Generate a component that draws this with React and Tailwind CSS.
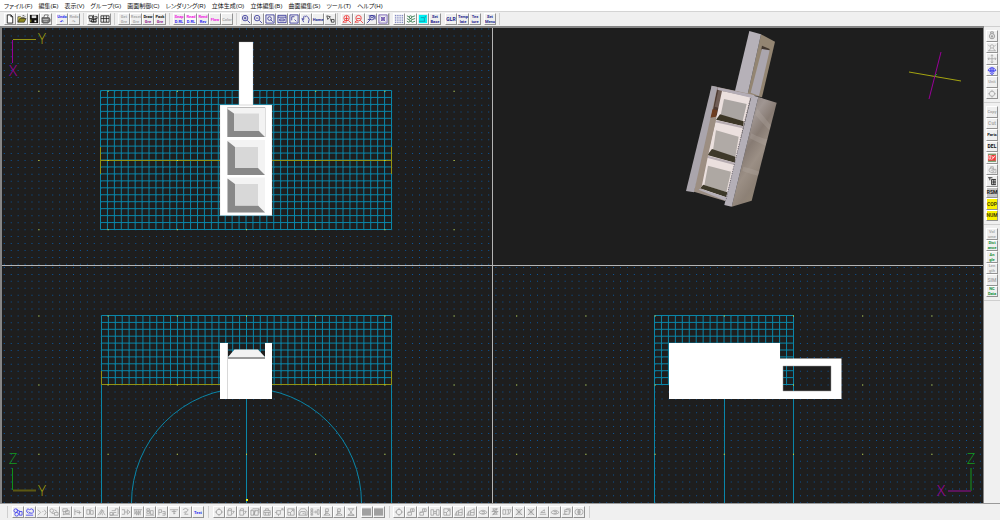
import React from "react";

const MENUS = [
  "ファイル(F)", "編集(E)", "表示(V)", "グループ(G)", "画面制御(C)", "レンダリング(R)",
  "立体生成(O)", "立体編集(B)", "曲面編集(S)", "ツール(T)", "ヘルプ(H)",
];

const GRAY = "#9a9a9a";
const NAVY = "#1c1c8c";
const BLUE = "#2a2af0";
const RED = "#f02020";

/* Stroke drawings on an 11 x 11 box. */
const ICONS = {
  layout: "M1 2h4v3h-4zM6 1v8M2 5v3h7M7 3h3v2h-3M4 6h5v3h-5z",
  grid4: "M1 2h9v7h-9zM4 2v7M7 2v7M1 5h9",
  plus: "M7.5 4.5a3 3 0 1 1-6 0a3 3 0 1 1 6 0M7 7l3 3M3 4.500h3M4.500 3v3",
  minus: "M7.5 4.5a3 3 0 1 1-6 0a3 3 0 1 1 6 0M7 7l3 3M3 4.500h3",
  rise: "M8 4.500a3 3 0 1 1-6 0a3 3 0 1 1 6 0M5 2v6M3 5h4M1 9l2-2M7 7l3 3M1 9h4",
  fall: "M8 4.500a3 3 0 1 1-6 0a3 3 0 1 1 6 0M3 5h4M1 9l2-2M7 7l3 3M1 9h4",
  fit: "M1 1h9v9h-9zM7 5a2 2 0 1 1-4 0a2 2 0 1 1 4 0M6.500 6.500l2 2",
  page: "M1 1.500h9v8h-9zM1 3.500h9M3 5.500h5v2h-5z",
  pick: "M1 1h9v9h-9zM3 3v4M3 3h3M6 6l2 2",
  hand: "M3 9l-2-4l2 1v-3l1-1l1 1l1-1l1 1l1 1l1 2l-1 4",
  cursor: "M2 2l4 1l-3 3zM6 5l1 3M7 6h3v3h-3z",
  lens: "M9 4a2.500 2.500 0 1 1-5 0a2.500 2.500 0 1 1 5 0M5 6l-4 4M3 2h7v4M5 4h3M2 6h3",
  target: "M1 1h9v9h-9zM3 3l5 5M8 3l-5 5M4 4h3v3h-3z",
  ring: "M8.500 5.500a3 3 0 1 1-6 0a3 3 0 1 1 6 0M5.500 1v2M5.500 8v2M1 5.500h2M8 5.500h2",
  move: "M5.500 1v9M1 5.500h9M4 2l1.500-1l1.500 1M4 9l1.500 1l1.500-1M2 4l-1 1.500l1 1.500M9 4l1 1.500l-1 1.500",
  globe: "M1 5q1-3 4.500-3t4.500 3q-1 2-4.500 2t-4.500-2M5.500 1v9M3 8l2.500 2l2.500-2M4 2v5M7 2v5M1 5h9",
  people: "M7.500 4a2 2 0 1 1-4 0a2 2 0 1 1 4 0M1 9h9M2 9l2-3M9 9l-2-3M1 2l2 2M10 2l-2 2",
  bulb: "M8.500 6a3 3 0 1 1-6 0a3 3 0 1 1 6 0M4 3v-2h3v2M4 6h3M5.500 5v3",
  lock: "M8 6a3 2.500 0 1 1-6 0a3 2.500 0 1 1 6 0M4 4v-2h3v2M6 5h4v4h-5M4 6h3",
  rings: "M5 4a2 2 0 1 1-4 0a2 2 0 1 1 4 0M6 8a2 2 0 1 1-4 0a2 2 0 1 1 4 0M7 5h3v4h-3zM4 3l4 2",
  cloud: "M2 3q1-2 3 0q2-2 4 0q1 3-1 4q-2-1-3 0M2 3q-1 3 2 4M1 9h8M4 5l2 2",
  split: "M1 3l3 3l-3 3M6 5h1M8 3l2 3l-2 3",
  pair: "M5 4a2 2 0 1 1-4 0a2 2 0 1 1 4 0M6 6h4v3h-4zM3 7h3M6 3l3 2",
  stack: "M2 2h5v3h-5zM5 4h4v3h-4zM2 8h8M3 5v4",
  branch: "M2 2v7M2 5l4-1M4 6h5M7 4v4",
  box: "M2 3h3v5h-3zM6 4h3v4h-3zM5 3l2-1",
  fold: "M1 9l4-6l4 6M3 9l2-4l1 4M5 3l3 2",
  steps: "M1 9v-3h3v3zM5 9v-3h3M3 4h4v-2h3v6M1 9h9",
  merge: "M1 3h3v5h-3M4 5.500h3M7 3l3 2.500l-3 2.500z",
  waves: "M2 3v5l2-4v5l2-5v5l2-5v5M1 3h9",
  rows: "M2 2h3v2h-3zM2 5h3v2h-3zM6 4h3v4h-3zM1 9h9",
  corner: "M2 9v-6h3v3h-3M6 5h3v4h-3M6 7h3",
  bar: "M1 3h9M3 5h5M5 7h2M5.500 3v5",
  curve: "M2 3q3-3 6 0l-4 5h4M3 6l3-1",
  cube: "M2 4h4v5h-4zM2 4l1-2h3v2M7 5h2M8 4l1 1l-2 3",
  cubes: "M1 4h3v5h-3zM5 4h4v5h-4zM1 4l2-2h7l-1 2M4 9l2-5M10 2v5",
  basket: "M2 4h7v5h-7zM4 4v-2h3v2M2 6h7M4 6v3M7 6v3",
  turn: "M3 4h4v4h-4zM1 6h2M7 4l3-2M8 2h2v2M5 8v2",
  scale: "M2 2h7v7h-7zM2 6h3v3M5 6l3-3M6 3h2v2",
  house: "M1 5l2-3h5l2 3v4h-9zM3 5h5v4M3 5l-2 4M5 7h2",
  array: "M1 2h2v2h-2zM1 5h2v2h-2zM1 8h2v1h-2zM4 5.500h3M6 4l1 1.500l-1 1.500M8 3h2v5h-2z",
  figure: "M4 2h3v3h-3zM5.500 5v2M2 9l2-2h3l2 2zM4 4v5",
  press: "M2 2h7M3 2l2 3v2l-3 2h7l-3-2v-2l2-3M2 9h7",
  climb: "M2 9v-3h3v-4h4v3h-3v4zM2 6l2-1M7 2v3",
  plates: "M1 3h3v6h-3zM7 3h3v6h-3zM4 5h3M4 7h3",
  wedge: "M1 9l2-4l6-3v7zM3 5v4M5 6h4M5 4v5",
  eye: "M1 6q4.500-5 9 0q-4.500 4-9 0M4 5h3v2h-3",
  knot: "M3 2h5l-6 3h7l-6 3h5M3 2l5 6M8 2l-5 7",
  strips: "M1 3h3v5h-3zM5 3h2v5h-2M7 3h3l-2 5",
  burst: "M2 2l7 7M9 2l-7 7M3 5.500h5M5.500 2v7M2 3h2M7 3h2M2 8h2M7 8h2",
  incline: "M2 8h7M3 6l4-3M3 6h5M7 3v2",
  frames: "M3 3h5v5h-5zM5 3v-1h4v4M1 8h4M3 5h3",
  lensring: "M7 5.500a3 3 0 1 1-6 0a3 3 0 1 1 6 0M10 5.500a3 3 0 1 1-6 0a3 3 0 1 1 6 0M5 4v3M6 4v3",
};

function Icon({ name, color = GRAY }) {
  return (
    <svg viewBox="0 0 11 11" className="h-full w-full" fill="none" stroke={color} strokeWidth="0.8" aria-hidden="true">
      <path d={ICONS[name]} />
    </svg>
  );
}

function FileIcon({ name }) {
  return (
    <svg viewBox="0 0 11 11" className="h-full w-full" aria-hidden="true">
      {name === "new" && <path d="M2.500 1h4l2 2v7h-6zM6.500 1v2h2" fill="#fff" stroke="#222" strokeWidth="1" />}
      {name === "open" && (
        <g stroke="#222" strokeWidth="0.7">
          <path d="M1 9v-6h3l1 1h3v2" fill="#eee36b" />
          <path d="M1 9l2-4h7l-2 4z" fill="#8f8a20" />
          <path d="M6 2q2-1 3 1" fill="none" />
        </g>
      )}
      {name === "save" && (
        <g>
          <path d="M1 1h9v9h-9z" fill="#111" />
          <path d="M3 1.500h5v3h-5z" fill="#ddd" />
          <path d="M1.500 6h1v3h-1z" fill="#98982a" />
          <path d="M6 7h2v2h-2z" fill="#eee" />
        </g>
      )}
      {name === "print" && (
        <g stroke="#333" strokeWidth="0.7">
          <path d="M3 4l1-3h4l-1 3" fill="#fff" />
          <path d="M1 4h8l1 2v2l-2 2h-6l-1-1z" fill="#777" />
          <path d="M2 6h6M3 8h4" stroke="#ddd" />
        </g>
      )}
      {name === "dots" && (
        <g fill="#4650a5">
          {[1, 3, 5, 7, 9].map((y) => [1, 3, 5, 7, 9].map((x) => <rect key={x + "-" + y} x={x} y={y} width="1" height="1" />))}
        </g>
      )}
      {name === "mesh" && (
        <path d="M1 2l2 1l2-1l2 1l3-1M1 5l2 1l2-1l2 1l3-1M1 8l2 1l2-1l2 1l3-1M3 3l2 2M7 3l-2 2M3 6l2 2M7 6l-2 2" fill="none" stroke="#287040" strokeWidth="0.9" />
      )}
      {name === "cyan" && (
        <g>
          <path d="M1 1h9v9h-9z" fill="#00f0f4" />
          <path d="M3 4h4v4M1 8h7M8 2v2" fill="none" stroke="#138a9a" strokeWidth="0.8" />
        </g>
      )}
      {name === "stamp" && (
        <g>
          <path d="M1 1h9v9h-9z" fill="#ef3b3b" />
          <path d="M1 1h9v1h-9zM1 9h9v1h-9z" fill="#55b878" />
          <path d="M2 3h2v4h-2zM5 3l2 3l2-3M5 8l3-4" fill="none" stroke="#fff" strokeWidth="0.8" />
        </g>
      )}
      {name === "tool" && (
        <path d="M1 2h5M3 2v3M5 4v6M5 4h5M7 4v6M9 4v6M5 10h5M6 7h4" fill="none" stroke="#222" strokeWidth="1" />
      )}
      {name === "block" && <path d="M0 1.500h10v8h-10z" fill="#a0a0a0" />}
    </svg>
  );
}

const BTN = "box-border flex items-center justify-center border border-t-white border-l-white border-r-[#929292] border-b-[#929292] p-0";

function ToolButton({ item, side }) {
  const face = item.bg === "yellow" ? "bg-[#f7f000]" : item.bg === "gray" ? "bg-[#c4c4c4]" : item.down ? "bg-[#fafafa]" : "bg-[#efefef]";
  const size = side ? "w-3" : "h-3 w-3 shrink-0";
  const small = item.t2 || (item.t && item.t.length > 3);
  return (
    <button type="button" aria-label={item.label || item.t} className={BTN + " " + face + " " + size}>
      {item.icon && <Icon name={item.icon} color={item.c} />}
      {item.file && <FileIcon name={item.file} />}
      {item.t && (
        <span
          className={
            "block whitespace-nowrap text-center font-['Roboto','Liberation_Sans',sans-serif] font-bold " +
            (small ? "text-[4px] leading-[5px]" : "text-[5px] leading-[8px]")
          }
          style={{ color: item.c || "#aaaaaa" }}
        >
          {item.t}
          {item.t2 && <span className="block" style={{ color: item.c2 || item.c || "#aaaaaa" }}>{item.t2}</span>}
        </span>
      )}
    </button>
  );
}

const FILE_TOOLS = ["new", "open", "save", "print"].map((n) => ({ file: n, label: n }));
const UNDO_TOOLS = [{ t: "Undo", t2: "↶", c: BLUE }, { t: "Redo", t2: "↷" }];
const VIEW_TOOLS = [{ icon: "layout", c: "#111", label: "Layout" }, { icon: "grid4", c: "#111", label: "Four views" }];
const GRP_TOOLS = [
  { t: "Get", t2: "Gre" }, { t: "Reset", t2: "Gre" },
  { t: "Draw", t2: "Gre", c: "#111", c2: "#8c228c" }, { t: "Pack", t2: "Gre", c: "#111", c2: "#8c228c" },
];
const REND_TOOLS = [
  { t: "Snap", t2: "D.RL", c: "#f020e0", c2: BLUE }, { t: "Read", t2: "D.RL", c: "#f020e0", c2: BLUE, down: true },
  { t: "Rend", t2: "Rev", c: "#f020e0", c2: BLUE }, { t: "Flow", c: "#f020e0" }, { t: "Color" },
];
const ZOOM_TOOLS = [
  ...["plus", "minus", "fit", "page", "pick", "hand"].map((n) => ({ icon: n, c: NAVY, label: n })),
  { t: "Home", c: NAVY }, { icon: "cursor", c: "#222", label: "Cursor" },
];
const SURF_TOOLS = [
  { icon: "rise", c: RED, label: "Enlarge" }, { icon: "fall", c: RED, label: "Reduce" },
  { icon: "lens", c: NAVY, label: "Lens" }, { icon: "target", c: "#5b3fa8", label: "Target" },
];
const SNAP_TOOLS = [
  { file: "dots", label: "Dots", down: true }, { file: "mesh", label: "Mesh", down: true },
  { file: "cyan", label: "Plane" }, { t: "Set", t2: "Base", c: NAVY },
];
const TEMP_TOOLS = [{ t: "GLR", c: NAVY }, { t: "Temp", t2: "late", c: NAVY }, { t: "Tex", t2: "ture", c: NAVY }];
const MENU_TOOLS = [{ t: "Set", t2: "Menu", c: NAVY }];

const SIDE_A = [
  { icon: "bulb", c: "#777", label: "Light" }, { icon: "people", label: "Group" }, { icon: "move", label: "Move" },
  { icon: "globe", c: BLUE, label: "Rotate" }, { t: "Unit" }, { icon: "ring", label: "Ring" },
];
const SIDE_B = [
  { t: "Copy" }, { t: "Cut" }, { t: "Parts", c: "#111" }, { t: "DEL", c: "#111" }, { file: "stamp", label: "Stamp" },
  { icon: "lock", label: "Lock" }, { file: "tool", label: "Tools" }, { t: "RSM", c: "#222", bg: "gray" },
  { t: "COP", c: "#443f00", bg: "yellow" }, { t: "NUM", c: "#443f00", bg: "yellow" },
];
const GREEN = "#159038";
const SIDE_C = [
  { t: "Vol", t2: "ume" }, { t: "Dist", t2: "ance", c: GREEN }, { t: "An", t2: "gle", c: GREEN },
  { t: "Len", t2: "gth" }, { t: "SIM" }, { t: "NC", t2: "Data", c: GREEN },
];

const gray = (names) => names.map((n) => ({ icon: n, label: n }));
const LOW_A = [
  { icon: "rings", c: BLUE, label: "Rings" }, { icon: "cloud", c: BLUE, label: "Loop" },
  ...gray(["split", "pair", "stack", "branch", "box", "fold", "steps", "merge", "waves", "rows", "corner", "bar", "curve"]),
  { t: "Text", c: BLUE },
];
const LOW_B = gray(["ring", "cube", "cube", "cubes", "basket", "turn", "scale", "house", "array", "figure", "figure", "press"]);
const LOW_BLOCKS = [{ file: "block", label: "Block one" }, { file: "block", label: "Block two" }];
const LOW_C = gray(["ring", "climb", "climb", "plates", "scale", "wedge", "wedge", "eye", "knot", "strips", "burst", "burst", "incline", "eye", "frames", "lensring"]);

function Group({ items }) {
  return (
    <div className="flex">
      {items.map((it, i) => <ToolButton key={i} item={it} />)}
    </div>
  );
}

function SideGroup({ items, rows }) {
  return (
    <div className={"grid justify-center " + rows}>
      {items.map((it, i) => <ToolButton key={i} item={it} side />)}
    </div>
  );
}

const Bar = () => <span className="h-3 w-px shrink-0 bg-[#cfcfcf]" />;

/* ---- drawing helpers ---- */
const STEP = 6.92;

function dotPath(x0, y0, box, step) {
  const [l, t, w, h] = box;
  let d = "";
  for (let y = y0 - Math.floor((y0 - t) / step) * step; y < t + h; y += step) {
    for (let x = x0 - Math.floor((x0 - l) / step) * step; x < l + w; x += step) {
      d += `M${x.toFixed(2)} ${y.toFixed(2)}h1v1h-1z`;
    }
  }
  return d;
}

function meshPath(x, y, cols, rows, w, h) {
  let d = "";
  for (let i = 0; i <= cols; i++) d += `M${(x + (w * i) / cols).toFixed(2)} ${y}v${h}`;
  for (let j = 0; j <= rows; j++) d += `M${x} ${(y + (h * j) / rows).toFixed(2)}h${w}`;
  return d;
}

function View({ box, label, children }) {
  return (
    <div className="relative min-h-0 min-w-0 overflow-hidden bg-[#1e1e1e]">
      <svg viewBox={box.join(" ")} preserveAspectRatio="xMinYMin slice" className="absolute inset-0 h-full w-full" role="img" aria-label={label}>
        {children}
      </svg>
    </div>
  );
}

const Dots = ({ x, y, box }) => <path d={dotPath(x, y, box, STEP)} fill="#0b579f" />;
const Majors = ({ x, y, box }) => <path d={dotPath(x, y, box, STEP * 10)} fill="#f4ec20" />;
const MESH = "#0a86a8";
const OLIVE = "#929212";

const Letter = ({ x, y, fill, children }) => (
  <text x={x} y={y} fill={fill} textAnchor="middle" fontSize="15" fontWeight="300" fontFamily="'Open Sans', 'Liberation Sans', sans-serif">
    {children}
  </text>
);

function Pocket({ y, h, l, r, t, b }) {
  return (
    <g>
      <path d={`M227.500 ${y}h37.500v${h}h-37.500z`} fill="#f3f3f3" />
      <path d={`M227.500 ${y + 1}L${l} ${t}V${b}H${r}L265 ${y + h}H227.500z`} fill="#888888" />
      <path d={`M${l} ${t}H${r}V${b}H${l}z`} fill="#d8d8d8" />
    </g>
  );
}

function TopView() {
  const box = [2, 28, 490, 237];
  return (
    <View box={box} label="Top view">
      <Dots x={246} y={160} box={box} />
      <path d={meshPath(100.5, 90.5, 42, 20, 291, 139)} fill="none" stroke={MESH} />
      <path d="M101 160.500H391M100.500 147V174M391.500 147V174" stroke={OLIVE} fill="none" />
      <Majors x={246} y={160} box={box} />
      <path d="M239 42h14v63h-14zM220 105h52v110.500h-52z" fill="#fff" stroke="#bbb" strokeWidth="0.3" />
      <path d="M227.500 137V107.500H265V137" fill="none" stroke="#bbb" />
      <Pocket y={108} h={29} l={234} r={259} t={113.5} b={131} />
      <Pocket y={140} h={35} l={235} r={258} t={147} b={168} />
      <Pocket y={177.5} h={35} l={235} r={258} t={184} b={205.5} />
      <path d="M13 39.500H36" stroke={OLIVE} />
      <path d="M12.500 40V63" stroke="#960096" />
      <Letter x={42} y={44} fill="#a0a010">Y</Letter>
      <Letter x={13} y={76} fill="#b000b0">X</Letter>
    </View>
  );
}

function PerspectiveView() {
  return (
    <View box={[493, 28, 490, 237]} label="Perspective view">
      <defs>
        <linearGradient id="side" x1="0" y1="0" x2="0.6" y2="1">
          <stop offset="0" stopColor="#7e7470" />
          <stop offset="0.2" stopColor="#8d827e" />
          <stop offset="0.35" stopColor="#a09692" />
          <stop offset="0.5" stopColor="#877b73" />
          <stop offset="0.65" stopColor="#9b8f85" />
          <stop offset="0.8" stopColor="#8d8176" />
          <stop offset="1" stopColor="#938672" />
        </linearGradient>
      </defs>
      <g transform="translate(680 25) scale(0.33333)">
        <path d="M243 28L285 50L246 217L203 208z" fill="#938572" />
        <path d="M208 18L243 28L203 208L165 198z" fill="#b6b1b8" />
        <path d="M246 62L269 72L267 80L244 73z" fill="#41372f" />
        <path d="M246 72L269 76L237 213L212 203z" fill="#aba6ae" />
        <path d="M95 182L215 208L135 528L42 500z" fill="#9b8e83" />
        <path d="M112 187L132 195L116 270L95 275z" fill="#4e3b32" />
        <path d="M116 192L132 198L120 250L104 245z" fill="#705e56" />
        <path d="M126 198L212 216L188 315L164 420L138 525L60 490L82 392L106 292z" fill="#ebe0de" />
        <path d="M132 222L200 237L188 288L122 271z" fill="#aaa5a2" />
        <path d="M120 268L191 289L190 304L108 284z" fill="#3c3626" />
        <path d="M110 286L190 304L188 310L106 292z" fill="#b6acb1" />
        <path d="M108 316L176 335L166 396L99 376z" fill="#b0aaa6" />
        <path d="M96 372L166 395L165 413L82 390z" fill="#3e392a" />
        <path d="M83 392L165 413L163 420L81 398z" fill="#b6acb1" />
        <path d="M84 422L153 440L139 501L73 481z" fill="#aea8a3" />
        <path d="M70 479L142 502L139 517L60 490z" fill="#3d3929" />
        <path d="M60 491L139 517L136 527L56 494z" fill="#b5afb7" />
        <path d="M112 187L225 211L213 218L112 194z" fill="#b3acb5" />
        <path d="M108 284L84 392L65 485L42 501L92 278z" fill="#9c8e82" />
        <path d="M97 252L112 256L108 275L90 278z" fill="#6d3d20" />
        <path d="M95 182L112 186L42 502L18 498z" fill="#aaa5ac" />
        <path d="M235 216L290 233L215 527L155 545z" fill="url(#side)" />
        <path d="M231 250Q255 280 272 300L268 316Q240 285 226 270zM214 325Q240 340 262 342L256 362Q230 350 209 340zM190 425Q214 430 238 440L234 452Q208 446 187 438z" fill="#b6aba4" opacity="0.3" />
        <path d="M215 211L235 216L155 545L133 540z" fill="#b4afb7" />
        <path d="M211 220L163 417L138 525" fill="none" stroke="#6f6870" strokeWidth="3" strokeDasharray="3 4" />
      </g>
      <path d="M909 72L961 81" stroke="#a4a410" />
      <path d="M941 52L929 99" stroke="#990099" />
      <path d="M935 76l2 -2" stroke="#20b020" strokeWidth="1" />
    </View>
  );
}

function FrontView() {
  const box = [2, 266, 490, 237];
  return (
    <View box={box} label="Front view">
      <Dots x={246} y={384.6} box={box} />
      <path d={meshPath(101.5, 315.5, 42, 10, 290, 69)} fill="none" stroke={MESH} />
      <path d="M101.500 384V503M391.500 384V503M246.500 385V503" fill="none" stroke={MESH} />
      <path d="M131.500 503A115 115 0 0 1 361.500 503" fill="none" stroke={MESH} />
      <path d="M101.500 371V384.500H391.500V371" fill="none" stroke={OLIVE} />
      <Majors x={246} y={384.6} box={box} />
      <path d="M220 343h8v15h37v-15h7v56h-52z" fill="#fff" />
      <path d="M234.500 349.500H258L265 357H228z" fill="#f2f2f2" />
      <path d="M228 358H265" stroke="#999" strokeWidth="2" />
      <path d="M227.500 344V399" stroke="#d8d8d8" />
      <rect x="246" y="499" width="2" height="2" fill="#f2ef10" />
      <path d="M12.500 468V490" stroke="#109018" />
      <path d="M13 490.500H36" stroke="#5c5812" strokeWidth="2" />
      <Letter x={13} y={464} fill="#139a20">Z</Letter>
      <Letter x={42} y={496} fill="#a0a010">Y</Letter>
    </View>
  );
}

function SideView() {
  const box = [493, 266, 490, 237];
  return (
    <View box={box} label="Side view">
      <Dots x={793} y={384.6} box={box} />
      <path d={meshPath(654.5, 315.5, 20, 10, 139, 69)} fill="none" stroke={MESH} />
      <path d="M654.500 384V503M724.500 384V503M793.500 384V503" fill="none" stroke={MESH} />
      <Majors x={793} y={384.6} box={box} />
      <path fillRule="evenodd" d="M669 343H780V358.500H841.500V399H669zM783 366H831V391H783z" fill="#fff" />
      <path d="M783 366H831V391H783z" fill="none" stroke="#999" strokeWidth="0.5" />
      <path d="M971 468V491" stroke="#195b1d" strokeWidth="2" />
      <path d="M948 491H971" stroke="#5b155b" strokeWidth="2" />
      <Letter x={971} y={464} fill="#139a20">Z</Letter>
      <Letter x={941} y={496} fill="#b000b0">X</Letter>
    </View>
  );
}

export default function App() {
  return (
    <div className="flex min-h-screen flex-col overflow-hidden bg-[#f0f0f0] font-['Liberation_Sans','Noto_Sans_CJK_JP',sans-serif]">
      <nav className="flex h-[11px] shrink-0 items-center gap-[6px] bg-white pl-1 font-['Liberation_Sans','Noto_Sans_CJK_JP',sans-serif] text-[6px] leading-[10px] text-[#111] [font-feature-settings:'palt']">
        {MENUS.map((m) => (
          <button key={m} type="button" className="whitespace-nowrap p-0">{m}</button>
        ))}
      </nav>

      <div role="toolbar" aria-label="Main tools" className="flex h-[15px] shrink-0 items-center border-t border-[#d4d4d4] pl-1">
        <Group items={FILE_TOOLS} />
        <div className="flex pl-1"><Group items={UNDO_TOOLS} /></div>
        <div className="flex gap-[3px] pl-[3px]"><Bar /><Group items={VIEW_TOOLS} /></div>
        <div className="flex gap-[3px] pl-[3px]"><Bar /><Group items={GRP_TOOLS} /></div>
        <div className="flex gap-[3px] pl-[3px]"><Bar /><Group items={REND_TOOLS} /></div>
        <div className="flex gap-[3px] pl-[3px]"><Bar /><Group items={ZOOM_TOOLS} /></div>
        <div className="flex gap-[3px] pl-px"><Bar /><Group items={SURF_TOOLS} /></div>
        <div className="flex gap-[3px]"><Bar /><Group items={SNAP_TOOLS} /></div>
        <div className="flex pl-1"><Group items={TEMP_TOOLS} /></div>
        <div className="flex gap-[3px] pl-[3px]"><Group items={MENU_TOOLS} /><Bar /></div>
      </div>

      <div className="flex min-h-0 flex-1">
        <main className="grid min-w-0 flex-1 grid-cols-2 grid-rows-2 gap-px border-t-2 border-r border-l-2 border-[#858585] bg-[#b4b4b4]">
          <TopView />
          <PerspectiveView />
          <FrontView />
          <SideView />
        </main>
        <aside aria-label="Side tools" className="flex w-4 shrink-0 flex-col gap-[3px] border-t border-[#cfcfcf] pt-[3px]">
          <SideGroup items={SIDE_A} rows="h-[69px] grid-rows-6" />
          <span className="h-px bg-[#cfcfcf]" />
          <SideGroup items={SIDE_B} rows="h-[115px] grid-rows-10" />
          <span className="h-px bg-[#cfcfcf]" />
          <SideGroup items={SIDE_C} rows="h-[69px] grid-rows-6" />
          <span className="h-px bg-[#cfcfcf]" />
        </aside>
      </div>

      <div role="toolbar" aria-label="Modelling tools" className="flex h-[17px] shrink-0 items-center gap-1 border-t border-[#9a9a9a] pl-[7px]">
        <Bar />
        <Group items={LOW_A} />
        <Bar />
        <Group items={LOW_B} />
        <Group items={LOW_BLOCKS} />
        <div className="flex gap-[3px]"><Bar /><Group items={LOW_C} /></div>
        <Bar />
      </div>
    </div>
  );
}
